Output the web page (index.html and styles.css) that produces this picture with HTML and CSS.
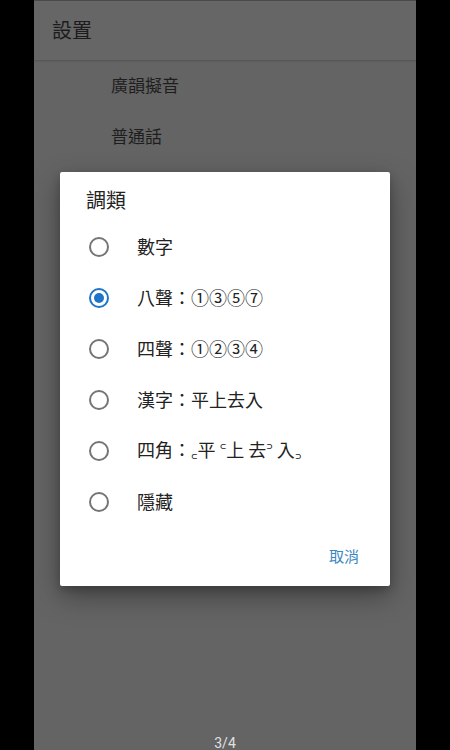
FILE: index.html
```html
<!DOCTYPE html>
<html lang="zh-Hant">
<head>
<meta charset="utf-8">
<link rel="stylesheet" href="styles.css">
</head>
<body>
<div class="screen">
  <div class="page">
    <div class="appbar"><span class="appbar-title">設置</span></div>
    <div class="pref-list">
      <div class="pref">廣韻擬音</div>
      <div class="pref">普通話</div>
    </div>
    <div class="pager">3/4</div>
  </div>
  <div class="dialog">
    <div class="dialog-title">調類</div>
    <div class="options">
      <div class="option"><span class="radio"></span><span class="label">數字</span></div>
      <div class="option"><span class="radio checked"></span><span class="label">八聲：①③⑤⑦</span></div>
      <div class="option"><span class="radio"></span><span class="label">四聲：①②③④</span></div>
      <div class="option"><span class="radio"></span><span class="label">漢字：平上去入</span></div>
      <div class="option"><span class="radio"></span><span class="label">四角：<span class="tone">꜀</span>平 <span class="tone">꜂</span>上 去<span class="tone">꜄</span> 入<span class="tone">꜆</span></span></div>
      <div class="option"><span class="radio"></span><span class="label">隱藏</span></div>
    </div>
    <div class="actions"><span class="btn">取消</span></div>
  </div>
</div>
</body>
</html>
```
FILE: styles.css
```css
html, body {
  margin: 0;
  padding: 0;
  background: #000;
}
body {
  font-family: "Noto Sans CJK TC", "Noto Sans", sans-serif;
}
.screen {
  position: relative;
  width: 450px;
  height: 750px;
  display: flex;
  justify-content: center;
}
.page {
  width: 382px;
  height: 750px;
  background: #646464;
  display: flex;
  flex-direction: column;
  border-top: 1px solid #4a4a4a;
  box-sizing: border-box;
}
.appbar {
  height: 59px;
  display: flex;
  align-items: center;
  padding-left: 18px;
  padding-bottom: 2px;
  box-sizing: border-box;
  background: #666;
  box-shadow: 0 1px 2px rgba(0,0,0,0.18);
}
.appbar-title {
  font-size: 20px;
  color: #1c1c1c;
}
.pref-list {
  display: flex;
  flex-direction: column;
}
.pref {
  height: 52px;
  display: flex;
  align-items: center;
  padding-left: 77px;
  padding-bottom: 3px;
  box-sizing: border-box;
  font-size: 17px;
  color: #1e1e1e;
}
.pref + .pref {
  margin-top: -1px;
}
.pager {
  margin-top: auto;
  text-align: center;
  font-size: 14px;
  color: #e0e0e0;
  height: 20px;
  line-height: 20px;
  margin-bottom: -3px;
  font-family: "Roboto", "Noto Sans", sans-serif;
}
.dialog {
  position: absolute;
  left: 60px;
  top: 172px;
  width: 330px;
  height: 414px;
  background: #fff;
  border-radius: 2px;
  box-shadow: 0 10px 28px rgba(0,0,0,0.35), 0 4px 10px rgba(0,0,0,0.2);
  box-sizing: border-box;
  padding: 14px 23px 11px 0;
  display: flex;
  flex-direction: column;
}
.dialog-title {
  font-size: 20px;
  line-height: 28px;
  color: #222;
  padding-left: 26px;
  margin-bottom: 7px;
}
.options {
  display: flex;
  flex-direction: column;
}
.option {
  height: 51px;
  display: flex;
  align-items: center;
  padding-left: 29px;
}
.radio {
  width: 20px;
  height: 20px;
  box-sizing: border-box;
  border: 2px solid #757575;
  border-radius: 50%;
  display: flex;
  align-items: center;
  justify-content: center;
  flex: none;
}
.radio.checked {
  border-color: #1e74c8;
}
.radio.checked::after {
  content: "";
  width: 10px;
  height: 10px;
  border-radius: 50%;
  background: #1e74c8;
}
.label {
  margin-left: 28px;
  margin-top: -2px;
  font-size: 18px;
  color: #222;
}
.tone {
  font-family: "DejaVu Sans", "Noto Sans", sans-serif;
  font-size: 19px;
}
.actions {
  margin-top: auto;
  display: flex;
  justify-content: flex-end;
}
.btn {
  height: 36px;
  line-height: 34px;
  padding: 0 8px;
  font-size: 15px;
  color: #3a86c0;
}
```
